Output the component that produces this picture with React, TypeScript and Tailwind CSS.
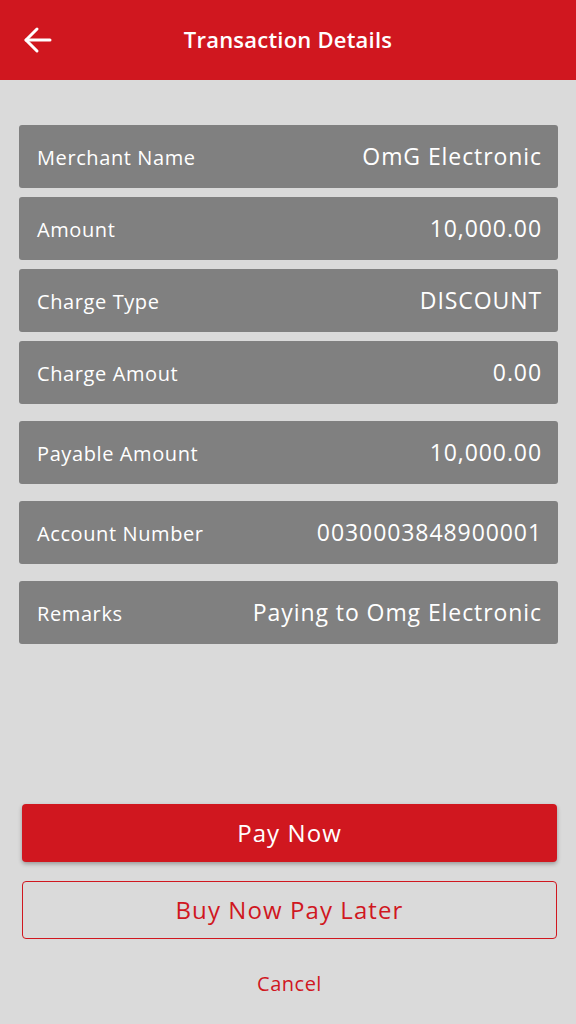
import React from 'react';

const rowsTop = [
  { label: 'Merchant Name', value: 'OmG Electronic' },
  { label: 'Amount', value: '10,000.00' },
  { label: 'Charge Type', value: 'DISCOUNT' },
  { label: 'Charge Amout', value: '0.00' },
];

const rowsBottom = [
  { label: 'Payable Amount', value: '10,000.00' },
  { label: 'Account Number', value: '0030003848900001' },
  { label: 'Remarks', value: 'Paying to Omg Electronic' },
];

const DetailRow: React.FC<{ label: string; value: string }> = ({ label, value }) => (
  <div className="flex h-[63px] items-center justify-between rounded-[3px] bg-[#808080] pl-[18px] pr-[16px] text-white">
    <span className="pt-[2px] text-[20px] tracking-[0.03em]">{label}</span>
    <span className="text-[23px] tracking-[0.04em]">{value}</span>
  </div>
);

const App: React.FC = () => {
  return (
    <div
      className="flex min-h-[1024px] w-[576px] flex-col bg-[#dadada]"
      style={{ fontFamily: '"Open Sans", "Liberation Sans", sans-serif' }}
    >
      {/* Header */}
      <div className="relative flex h-[80px] items-center justify-center bg-[#d0171f]">
        <button className="absolute left-[22px] top-[26px]" aria-label="Back">
          <svg width="30" height="28" viewBox="0 0 30 28" fill="none" stroke="white" strokeWidth="3" strokeLinecap="round" strokeLinejoin="round">
            <path d="M28 14H4" />
            <path d="M15 3 4 14l11 11" />
          </svg>
        </button>
        <h1 className="pb-[2px] text-[22px] font-semibold tracking-[0.01em] text-white">Transaction Details</h1>
      </div>

      {/* Details */}
      <div className="flex flex-col gap-[17px] pl-[19px] pr-[18px] pt-[45px]">
        <div className="flex flex-col gap-[9px]">
          {rowsTop.map((r) => (
            <DetailRow key={r.label} label={r.label} value={r.value} />
          ))}
        </div>
        {rowsBottom.map((r) => (
          <DetailRow key={r.label} label={r.label} value={r.value} />
        ))}
      </div>

      {/* Actions */}
      <div className="mt-[160px] flex flex-col pl-[22px] pr-[19px]">
        <button className="flex h-[58px] items-center justify-center rounded-[4px] bg-[#d0171f] text-[24px] tracking-[0.045em] text-white shadow-[0_2px_4px_rgba(0,0,0,0.3)]">
          Pay Now
        </button>
        <button className="mt-[19px] flex h-[58px] items-center justify-center rounded-[4px] border-[1.5px] border-[#d0171f] text-[24px] tracking-[0.045em] text-[#d0171f]">
          Buy Now Pay Later
        </button>
        <button className="mt-[30px] self-center text-[20px] tracking-[0.025em] text-[#d0171f]">Cancel</button>
      </div>
    </div>
  );
};

export default App;
